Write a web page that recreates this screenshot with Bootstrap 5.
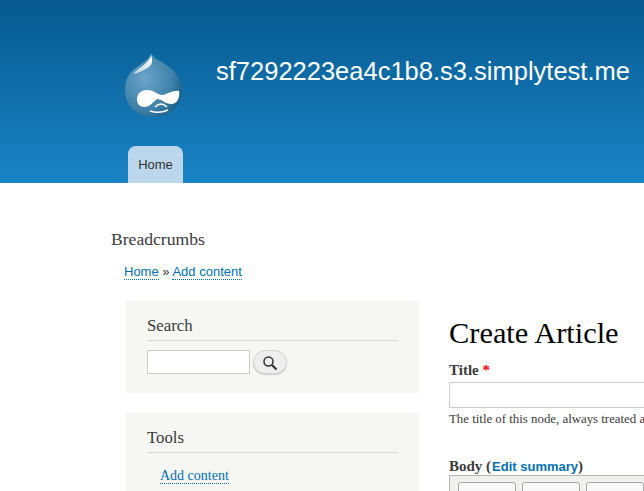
<!DOCTYPE html>
<html lang="en"><head><meta charset="utf-8">
<title>Create Article</title>
<link href="https://cdn.jsdelivr.net/npm/bootstrap@5.3.0/dist/css/bootstrap.min.css" rel="stylesheet">
<style>
html,body{height:491px;overflow:hidden;background:#fff}
body{font-family:"Liberation Serif",serif;font-size:13px;color:#3b3b3b}
.site-head{height:183px;background:linear-gradient(#05598f,#1b84c5);position:relative}
.head-inner{padding:52px 0 0 124px}
.site-name{font:25.5px/1 "Liberation Sans",sans-serif;color:#fff;margin:7px 0 0 32px;white-space:nowrap}
.tab-row{padding-left:128px;position:absolute;bottom:0;left:0}
.home-tab{display:block;width:55px;height:37px;background:#bcd7ec;border-radius:8px 8px 0 0;color:#333;font:13px/37px "Liberation Sans",sans-serif;text-align:center;text-decoration:none}
.crumb-title{font-size:17.6px;line-height:20px;margin:46px 0 0 111px;font-weight:400}
.crumbs{font:13px/16px "Liberation Sans",sans-serif;margin:15px 0 0 124px}
.crumbs a,.tools-link{color:#0071b3;text-decoration:none;border-bottom:1px dotted #0071b3}
.layout{margin:21px 0 0 126px;gap:30px}
.side-col{width:293px;flex:none}
.side-box{background:#f6f6f2;padding:15px 21px 19px;margin-bottom:20px}
.box-title{font-size:16.8px;line-height:20px;font-weight:400;border-bottom:1px solid #d6d6d6;padding-bottom:4px;margin:0 0 9px}
.search-in{width:103px;height:24px;border:1px solid #ccc;background:#fff;display:block}
.search-btn{width:34px;height:24px;border:1px solid #d5d5d5;border-radius:12px;background:#eee;padding:0;margin:0 0 0 3px;box-shadow:0 1px 1px #ccc}
.tools-box-link{padding-top:3px}
.tools-link{font-size:14px;margin-left:13px}
.main-col{width:400px;flex:none}
.page-title{font-size:30.4px;line-height:34px;color:#000;margin:15px 0 11px;font-weight:400}
.fld-label{font-weight:700;font-size:15px;line-height:18px;display:block}
.req{color:#f00}
.title-in{display:block;width:400px;height:26px;border:1px solid #ccc;margin-top:3px}
.fld-help{font-size:12.85px;line-height:16px;margin:3px 0 30px;white-space:nowrap}
.body-link{font:700 13px "Liberation Sans",sans-serif;color:#0071b3;text-decoration:none;margin-left:1px}
.editor{border:1px solid #b6b6b6;background:#f0f0ee;height:60px;padding:6px 0 0 8px;gap:6px}
.tool-btn{width:58px;height:26px;border:1px solid #a6a6a6;border-radius:3px;background:#f8f8f8;font:700 15px/28px "Liberation Sans",sans-serif;color:#222;text-align:center}
</style></head>
<body>
<header class="site-head">
  <div class="head-inner d-flex align-items-start">
    <svg width="60" height="66" viewBox="0 0 60 66" aria-label="Drupal logo">
      <defs>
        <radialGradient id="dg" cx="0.35" cy="0.4" r="0.75"><stop offset="0" stop-color="#6ba5c8"/><stop offset="0.65" stop-color="#3f80a9"/><stop offset="1" stop-color="#14587f"/></radialGradient>
        <linearGradient id="hl" x1="1" y1="0" x2="0" y2="1"><stop offset="0" stop-color="#fff"/><stop offset="1" stop-color="#b9d3e4"/></linearGradient>
      </defs>
      <path d="M27 1C26 7 15 13 8 19C3 24 1 31 1 38C1 54 13 65 29 65C45 65 58 54 58 38C58 23 47 16 38 10C33 7 29 5 27 1Z" fill="url(#dg)"/>
      <path d="M27 3C26 10 16 15 9 22C14 21 22 18 27 13C29 9 28 6 27 3Z" fill="url(#hl)"/>
      <path d="M13 47C13 41 18 38 23 38C30 38 34 43 38 43C43 43 48 38 55 39C56 45 54 52 47 52C41 52 38 47 33 47C29 50 26 55 20 55C15 55 13 51 13 47Z" fill="#fff"/>
      <path d="M26 59Q35 62 44 58" stroke="#fff" stroke-width="1.5" fill="none"/>
      <path d="M31 55Q37 49 43 55" stroke="#fff" stroke-width="1.5" fill="none"/>
    </svg>
    <div class="site-name">sf7292223ea4c1b8.s3.simplytest.me</div>
  </div>
  <nav class="tab-row"><a class="home-tab" href="#">Home</a></nav>
</header>
<h2 class="crumb-title">Breadcrumbs</h2>
<div class="crumbs"><a href="#">Home</a> » <a href="#">Add content</a></div>
<div class="layout d-flex">
  <aside class="side-col">
    <div class="side-box">
      <h2 class="box-title">Search</h2>
      <div class="d-flex align-items-start">
        <input class="search-in" type="text" aria-label="Search">
        <button class="search-btn" type="button" aria-label="Search"><svg width="16" height="16" viewBox="0 0 16 16"><circle cx="6.5" cy="6.5" r="4.5" fill="none" stroke="#333" stroke-width="1.5"/><path d="M10 10l4.5 4.5" stroke="#333" stroke-width="2.2"/></svg></button>
      </div>
    </div>
    <div class="side-box">
      <h2 class="box-title">Tools</h2>
      <div class="tools-box-link"><a class="tools-link" href="#">Add content</a></div>
    </div>
  </aside>
  <main class="main-col">
    <h1 class="page-title">Create Article</h1>
    <label class="fld-label">Title <span class="req">*</span></label>
    <input class="title-in" type="text" aria-label="Title">
    <div class="fld-help">The title of this node, always treated as non-markup plain text.</div>
    <label class="fld-label">Body (<a class="body-link" href="#">Edit summary</a>)</label>
    <div class="editor d-flex"><div class="tool-btn">Bold</div><div class="tool-btn"></div><div class="tool-btn"></div></div>
  </main>
</div>
</body></html>
